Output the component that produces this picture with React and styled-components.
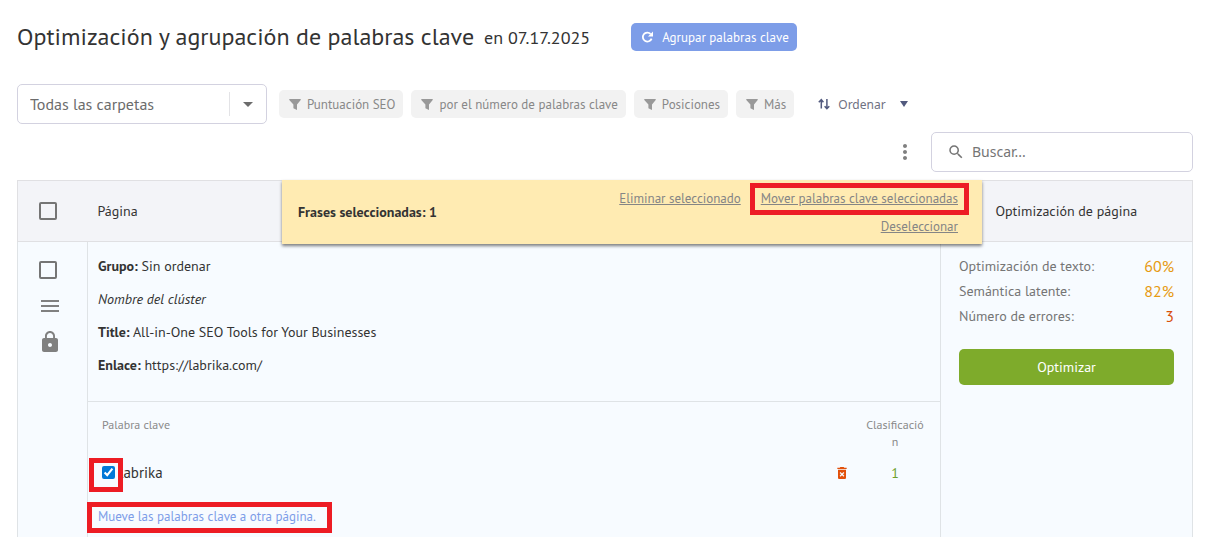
import React from 'react'
import styled, { createGlobalStyle } from 'styled-components'
import { MdMenu, MdLock, MdMoreVert, MdSearch, MdDeleteForever, MdArrowDropDown } from 'react-icons/md'

const GlobalStyle = createGlobalStyle`
*{
    box-sizing: border-box;
}

body{
    margin: 0;
    background: #fff;
    color: #333;
    font-family: "PT Sans", "Noto Sans", sans-serif;
    font-size: 14px;
}

button, input, select{
    font-family: inherit;
}
`;

const Page = styled.main`
display: flex;
flex-direction: column;
height: 100vh;
overflow: hidden;
padding: 20px 12px 0 17px;
`;

const TitleBar = styled.header`
display: flex;
align-items: center;
height: 34px;
`;

const Title = styled.h1`
margin: 0 10px 0 0;
font-size: 24px;
font-weight: 400;
line-height: 34px;
`;

const TitleDate = styled.span`
margin-right: 41px;
font-size: 18px;
line-height: 34px;
padding-top: 2px;
`;

const GroupButton = styled.button`
display: flex;
align-items: center;
gap: 8px;
height: 28px;
padding: 0 8px 0 10px;
border: 0;
border-radius: 5px;
background: #7d9de8;
color: #fff;
font-size: 13px;
`;

const Filters = styled.div`
display: flex;
align-items: center;
gap: 8px;
margin-top: 30px;
`;

const SelectBox = styled.div`
display: grid;
grid-template-columns: 1fr 37px;
align-items: center;
width: 250px;
height: 40px;
margin-right: 4px;
border: 1px solid #d3d2e0;
border-radius: 5px;

select{
    grid-area: 1 / 1 / 2 / 3;
    height: 38px;
    padding: 0 40px 0 12px;
    border: 0;
    background: transparent;
    color: #6c6c6c;
    font-size: 16px;
    appearance: none;
}

span{
    grid-area: 1 / 2;
    display: flex;
    align-items: center;
    justify-content: center;
    height: 24px;
    border-left: 1px solid #e3e3e6;
    color: #6c6c6c;
    pointer-events: none;
}
`;

const Chip = styled.button`
display: flex;
align-items: center;
gap: 6px;
height: 28px;
padding: 0 8px 0 10px;
border: 0;
border-radius: 5px;
background: #f2f2f2;
color: #888;
font-size: 13px;

svg{
    color: #999;
}
`;

const SortButton = styled.button`
display: flex;
align-items: center;
gap: 8px;
margin-left: 16px;
padding: 0;
border: 0;
background: transparent;
color: #6f7182;
font-family: "Noto Sans", sans-serif;
font-size: 12px;

svg{
    color: #525a7e;
}

svg:last-child{
    margin-left: 6px;
}
`;

const SearchBar = styled.div`
display: flex;
align-items: center;
justify-content: flex-end;
gap: 14px;
margin-top: 8px;
`;

const IconButton = styled.button`
display: flex;
padding: 0;
border: 0;
background: transparent;
color: ${({ $color }) => $color || '#808080'};
`;

const SearchBox = styled.label`
display: flex;
align-items: center;
gap: 7px;
width: 262px;
height: 40px;
padding: 0 15px;
border: 1px solid #d3d2e0;
border-radius: 5px;
color: #757575;

input{
    flex: 1;
    min-width: 0;
    padding: 0 0 2px;
    border: 0;
    outline: 0;
    font-family: "Noto Sans", sans-serif;
    font-size: 14px;
}

input::placeholder{
    color: #757575;
}
`;

const TableWrap = styled.section`
position: relative;
flex: 1;
margin-top: 8px;
`;

const PagesTable = styled.table`
width: 100%;
height: 100%;
border-collapse: collapse;
table-layout: fixed;
background: #f7fbff;

th, td{
    padding: 0;
    font-weight: 400;
    text-align: left;
    vertical-align: top;
}

> thead th{
    height: 61px;
    border: solid #e0e0e3;
    border-width: 1px 0;
    background: #f3f4f8;
    vertical-align: middle;
}

> thead th:first-child{
    border-left-width: 1px;
}

> thead th:last-child{
    border-right-width: 1px;
    text-align: center;
}

> thead th:nth-child(2){
    padding-left: 10px;
}

> tbody > tr > td{
    border: 1px solid #dfe3e6;
    border-bottom: 0;
}
`;

const Tick = styled.input`
display: block;
width: 18px;
height: 18px;
margin: 0;
border: 2px solid #757575;
border-radius: 2px;
appearance: none;
`;

const HeadTick = styled.div`
padding-left: 21px;
`;

const Tools = styled.div`
display: flex;
flex-direction: column;
align-items: center;
gap: 15px;
width: 60px;
padding-top: 19px;
`;

const ToolIcons = styled.div`
display: flex;
flex-direction: column;
gap: 12px;
padding-left: 4px;
color: #808080;
`;

const Info = styled.div`
padding: 8px 10px 19px;
border-bottom: 1px solid #dfe3e6;

p{
    margin: 0;
    line-height: 33px;
}

a{
    color: inherit;
    text-decoration: none;
}
`;

const KeywordsTable = styled.table`
width: 100%;
border-collapse: collapse;
table-layout: fixed;

th{
    padding: 14px 14px 0;
    color: #8a8a8a;
    font-size: 12px;
    line-height: 17px;
    overflow-wrap: anywhere;
}

td{
    height: 45px;
    vertical-align: middle;
}

td:nth-child(2){
    padding-left: 10px;
}

th:last-child, td:last-child{
    padding-left: 0;
    padding-right: 16px;
    text-align: center;
}
`;

const Keyword = styled.label`
display: flex;
align-items: center;
gap: 4px;
padding-left: 14px;
font-size: 15px;

input{
    display: block;
    width: 13px;
    height: 13px;
    margin: 0;
    accent-color: #0078d7;
}
`;

const Rank = styled.span`
color: #6e9f2b;
`;

const Marked = styled.span`
position: relative;
display: inline-block;

&::after{
    position: absolute;
    inset: ${({ $inset }) => $inset};
    border: 5px solid #ed1c24;
    content: '';
    pointer-events: none;
}
`;

const MoveRow = styled.div`
padding: 12px 10px;
font-size: 13px;
line-height: 20px;

a{
    color: #7d9de8;
    text-decoration: none;
}
`;

const Scores = styled.dl`
display: grid;
grid-template-columns: 1fr auto;
margin: 12px 18px 20px;
line-height: 25px;

dt{
    color: #757575;
}
`;

const Score = styled.dd`
margin: 0;
color: ${({ $bad }) => $bad ? '#d9500b' : '#e69a12'};
font-size: 16px;
text-align: right;
`;

const OptimizeButton = styled.button`
display: block;
width: calc(100% - 36px);
height: 36px;
margin: 0 18px;
border: 0;
border-radius: 5px;
background: #7eab2b;
color: #fff;
font-size: 14px;
`;

const Banner = styled.div`
position: absolute;
top: 0;
left: 265px;
right: 211px;
display: flex;
align-items: center;
justify-content: space-between;
height: 64px;
padding: 0 24px 0 16px;
background: #ffebb2;
box-shadow: 0 2px 3px rgba(0, 0, 0, .5);
`;

const Actions = styled.div`
display: flex;
flex-wrap: wrap;
justify-content: flex-end;
column-gap: 20px;
max-width: 360px;
padding-top: 2px;
font-size: 13px;
line-height: 28px;

a{
    color: #858585;
}
`;

const RefreshIcon = () => (
    <svg width="13" height="12" viewBox="0 0 13 12" fill="none">
        <path d="M9.6 2.9A4.5 4.5 0 1 0 10.6 7.6" stroke="currentColor" strokeWidth="1.8" />
        <path d="M12 .4V5.4H7z" fill="currentColor" />
    </svg>
)

const FilterIcon = () => (
    <svg width="12" height="11" viewBox="0 0 12 11" fill="currentColor">
        <path d="M.3 0h11.4v1L8 5.6V11L4.4 9.2V5.6L.3 1z" />
    </svg>
)

const SortIcon = () => (
    <svg width="12" height="12" viewBox="0 0 12 12" fill="none" stroke="currentColor" strokeWidth="1.5">
        <path d="M3.3 10.5V2M.8 4.2 3.3 1.6 5.4 4.2M8.9 1v9M6.6 8.2 8.9 10.6 11.3 8.2" />
    </svg>
)

const filters = ['Puntuación SEO', 'por el número de palabras clave', 'Posiciones', 'Más'];

const scores = [
    { label: 'Optimización de texto:', value: '60%' },
    { label: 'Semántica latente:', value: '82%' },
    { label: 'Número de errores:', value: '3', bad: true },
];

const App = () => {
    return (
        <Page>
            <GlobalStyle />
            <TitleBar>
                <Title>Optimización y agrupación de palabras clave</Title>
                <TitleDate>en 07.17.2025</TitleDate>
                <GroupButton><RefreshIcon />Agrupar palabras clave</GroupButton>
            </TitleBar>

            <Filters>
                <SelectBox>
                    <select aria-label="Carpeta">
                        <option>Todas las carpetas</option>
                    </select>
                    <span><MdArrowDropDown size={24} /></span>
                </SelectBox>
                {filters.map((item, index) => <Chip key={index}><FilterIcon />{item}</Chip>)}
                <SortButton>
                    <SortIcon />Ordenar
                    <svg width="8" height="6" viewBox="0 0 8 6" fill="currentColor"><path d="M0 0h8L4 6z" /></svg>
                </SortButton>
            </Filters>

            <SearchBar>
                <IconButton aria-label="Opciones"><MdMoreVert size={24} /></IconButton>
                <SearchBox>
                    <MdSearch size={18} />
                    <input type="text" aria-label="Buscar" placeholder="Buscar..." />
                </SearchBox>
            </SearchBar>

            <TableWrap>
                <PagesTable>
                    <colgroup>
                        <col width="70" />
                        <col />
                        <col width="252" />
                    </colgroup>
                    <thead>
                        <tr>
                            <th><HeadTick><Tick type="checkbox" aria-label="Seleccionar todo" /></HeadTick></th>
                            <th>Página</th>
                            <th>Optimización de página</th>
                        </tr>
                    </thead>
                    <tbody>
                        <tr>
                            <td>
                                <Tools>
                                    <Tick type="checkbox" aria-label="Seleccionar página" />
                                    <ToolIcons>
                                        <MdMenu size={24} />
                                        <MdLock size={24} />
                                    </ToolIcons>
                                </Tools>
                            </td>
                            <td>
                                <Info>
                                    <p><b>Grupo:</b> Sin ordenar</p>
                                    <p><i>Nombre del clúster</i></p>
                                    <p><b>Title:</b> All-in-One SEO Tools for Your Businesses</p>
                                    <p><b>Enlace:</b> <a href="https://labrika.com/">https://labrika.com/</a></p>
                                </Info>
                                <KeywordsTable>
                                    <colgroup>
                                        <col />
                                        <col width="42" />
                                        <col width="74" />
                                    </colgroup>
                                    <thead>
                                        <tr>
                                            <th>Palabra clave</th>
                                            <th></th>
                                            <th>Clasificación</th>
                                        </tr>
                                    </thead>
                                    <tbody>
                                        <tr>
                                            <td>
                                                <Keyword>
                                                    <Marked $inset="-8px -8px -13px -13px"><input type="checkbox" defaultChecked /></Marked>
                                                    labrika
                                                </Keyword>
                                            </td>
                                            <td>
                                                <IconButton $color="#e2500b" aria-label="Eliminar"><MdDeleteForever size={16} /></IconButton>
                                            </td>
                                            <td><Rank>1</Rank></td>
                                        </tr>
                                    </tbody>
                                </KeywordsTable>
                                <MoveRow>
                                    <Marked $inset="-5px -16px -6px -11px"><a href="#mover">Mueve las palabras clave a otra página.</a></Marked>
                                </MoveRow>
                            </td>
                            <td>
                                <Scores>
                                    {scores.map((item, index) => <React.Fragment key={index}>
                                        <dt>{item.label}</dt>
                                        <Score $bad={item.bad}>{item.value}</Score>
                                    </React.Fragment>)}
                                </Scores>
                                <OptimizeButton>Optimizar</OptimizeButton>
                            </td>
                        </tr>
                    </tbody>
                </PagesTable>
                <Banner>
                    <b>Frases seleccionadas: 1</b>
                    <Actions>
                        <a href="#eliminar">Eliminar seleccionado</a>
                        <Marked $inset="-2px -11px"><a href="#mover">Mover palabras clave seleccionadas</a></Marked>
                        <a href="#deseleccionar">Deseleccionar</a>
                    </Actions>
                </Banner>
            </TableWrap>
        </Page>
    )
}

export default App
